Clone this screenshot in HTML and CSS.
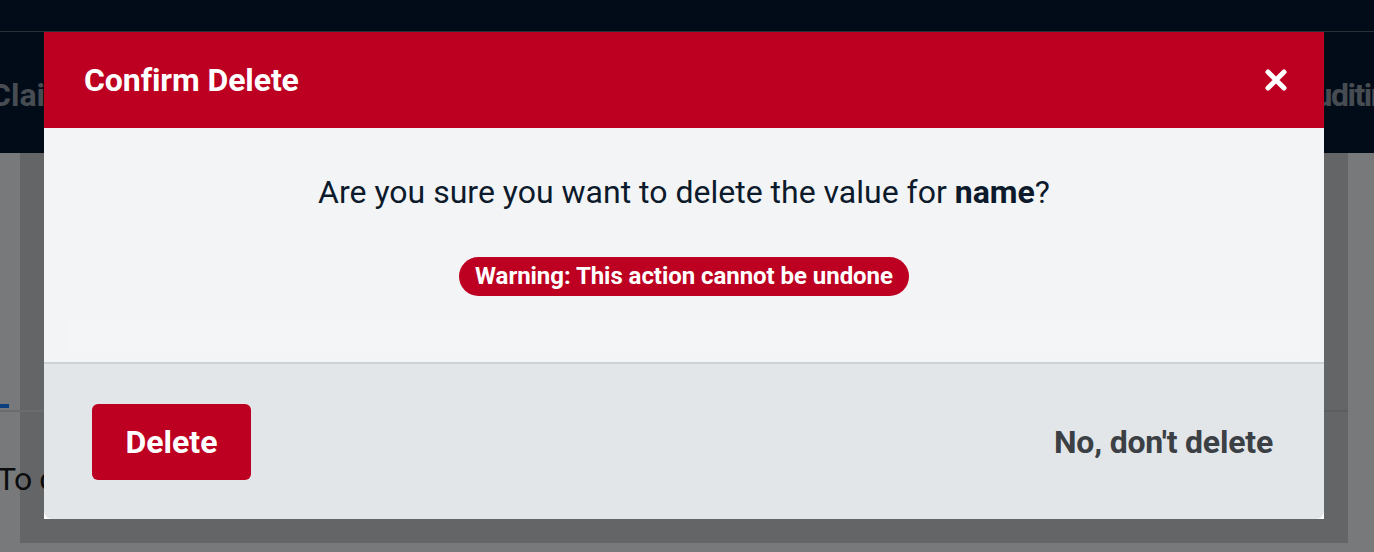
FILE: index.html
```html
<!DOCTYPE html>
<html lang="en">
<head>
<meta charset="utf-8">
<title>Confirm Delete</title>
<link rel="stylesheet" href="styles.css">
</head>
<body>
<header class="nav">
  <div class="topbar"></div>
  <nav class="subnav">
    <span class="nav-link first">Claims</span>
    <span class="nav-link last">Auditing</span>
  </nav>
</header>
<main class="page">
  <div class="side">
    <div class="tabs"><span class="tab-active"></span></div>
    <p class="intro">To confirm</p>
  </div>
  <div class="card">
    <div class="card-tabs"></div>
  </div>
</main>

<div class="modal" role="dialog" aria-labelledby="modal-title">
  <div class="modal-header">
    <h2 id="modal-title" class="modal-title">Confirm Delete</h2>
    <button class="close-btn" aria-label="Close">
      <svg width="22" height="22" viewBox="0 0 22 22" aria-hidden="true">
        <path d="M3 3 L19 19 M19 3 L3 19" stroke="#fff" stroke-width="5" stroke-linecap="round" fill="none"/>
      </svg>
    </button>
  </div>
  <div class="modal-body">
    <p class="question">Are you sure you want to delete the value for <strong>name</strong>?</p>
    <span class="badge">Warning: This action cannot be undone</span>
    <div class="band"></div>
  </div>
  <div class="modal-footer">
    <button class="btn-delete">Delete</button>
    <button class="btn-cancel">No, don't delete</button>
  </div>
</div>
</body>
</html>
```
FILE: styles.css
```css
* { box-sizing: border-box; }
html, body { margin: 0; padding: 0; }
body {
  width: 1374px;
  height: 552px;
  overflow: hidden;
  background: #78797b;
  font-family: Roboto, "Liberation Sans", sans-serif;
}

.nav {
  background: #020c18;
  height: 153px;
  overflow: hidden;
}
.topbar {
  height: 32px;
  border-bottom: 1px solid #2a3037;
}
.subnav {
  display: flex;
  justify-content: space-between;
  align-items: center;
  height: 120px;
  padding-top: 6px;
}
.nav-link {
  font-size: 32px;
  font-weight: 700;
  color: #474c53;
  white-space: nowrap;
}
.nav-link.first { margin-left: -10px; }
.nav-link.last { margin-right: -30px; letter-spacing: -1.5px; }

.page {
  display: flex;
  height: 399px;
}
.side {
  width: 20px;
  overflow: visible;
  position: relative;
  z-index: 0;
}
.tabs {
  margin-top: 251px;
  height: 8px;
  border-bottom: 2px solid #6b6c6e;
  width: 44px;
}
.tab-active {
  display: block;
  width: 9px;
  height: 4px;
  background: #0b3f80;
}
.intro {
  margin: 48px 0 0 -3px;
  font-size: 32px;
  color: #0b0c0d;
  white-space: nowrap;
  letter-spacing: -0.5px;
}
.card {
  width: 1328px;
  height: 390px;
  background: #646566;
}
.card-tabs {
  margin-top: 257px;
  border-bottom: 2px solid #5c5d5e;
}

.modal {
  position: absolute;
  left: 44px;
  top: 32px;
  width: 1280px;
  background: #ffffff;
  z-index: 5;
}
.modal-header {
  height: 96px;
  background: #bd0021;
  display: flex;
  align-items: center;
  justify-content: space-between;
  padding: 0 37px 0 40px;
}
.modal-title {
  margin: 0;
  font-size: 32px;
  font-weight: 700;
  color: #ffffff;
  letter-spacing: -0.1px;
}
.close-btn {
  background: none;
  border: 0;
  padding: 0;
  width: 22px;
  height: 22px;
  display: flex;
  cursor: pointer;
}

.modal-body {
  background: #f3f4f6;
  padding: 40px 26px 10px;
  display: flex;
  flex-direction: column;
  align-items: center;
}
.question {
  margin: 0 0 41px;
  font-size: 32px;
  line-height: 48px;
  color: #0c1a2b;
}
.question strong { font-weight: 700; }
.badge {
  display: inline-block;
  background: #bd0021;
  color: #ffffff;
  font-size: 24px;
  font-weight: 700;
  line-height: 31px;
  padding: 4px 16px;
  border-radius: 20px;
  letter-spacing: -0.05px;
}
.band {
  align-self: stretch;
  margin-top: 22px;
  height: 34px;
  background: #f4f5f7;
}

.modal-footer {
  background: #e2e6e9;
  border-top: 2px solid #cdd2d7;
  border-radius: 0 0 8px 8px;
  height: 157px;
  padding: 1px 51px 0 48px;
  display: flex;
  align-items: center;
  justify-content: space-between;
}
.btn-delete {
  background: #bd0021;
  color: #ffffff;
  border: 0;
  border-radius: 6px;
  width: 159px;
  height: 76px;
  font-family: inherit;
  font-size: 32px;
  font-weight: 700;
  cursor: pointer;
}
.btn-cancel {
  background: none;
  border: 0;
  padding: 0;
  color: #3b4045;
  font-family: inherit;
  font-size: 32px;
  font-weight: 700;
  letter-spacing: -0.2px;
  cursor: pointer;
}
```
